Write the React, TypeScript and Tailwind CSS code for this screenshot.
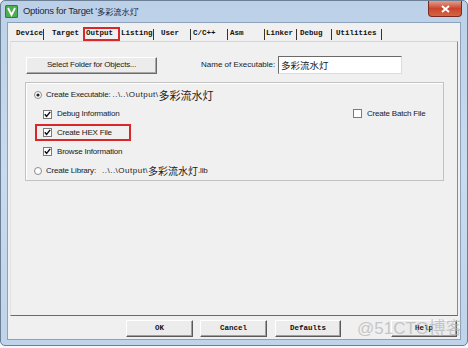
import React from "react";

const Check = ({ checked }: { checked: boolean }) => (
  <svg width="9" height="9" viewBox="0 0 9 9" className="shrink-0">
    <rect x="0.5" y="0.5" width="8" height="8" fill="#ffffff" stroke="#7a7a7a" />
    {checked && (
      <path d="M1.8 4.2 L3.6 6.4 L7.2 1.9" stroke="#111111" strokeWidth="1.5" fill="none" />
    )}
  </svg>
);

const Radio = ({ on }: { on: boolean }) => (
  <svg width="8" height="8" viewBox="0 0 8 8" className="shrink-0">
    <circle cx="4" cy="4" r="3.5" fill="#ffffff" stroke="#8a8a8a" />
    {on && <circle cx="4" cy="4" r="1.6" fill="#222222" />}
  </svg>
);

const cjk = "text-[11px] tracking-normal [font-family:'Noto_Sans_CJK_SC',sans-serif]";

const tabs = [
  { label: "Device", w: "w-[32px]", pl: "pl-[4px]", sep: true },
  { label: "Target", w: "w-[39px]", pl: "pl-[8px]", sep: false },
  { label: "Output", w: "w-[37px]", pl: "pl-[1px]", sep: false, active: true },
  { label: "Listing", w: "w-[34px]", pl: "pl-[1px]", sep: true },
  { label: "User", w: "w-[37px]", pl: "pl-[7px]", sep: true },
  { label: "C/C++", w: "w-[37px]", pl: "pl-[2px]", sep: true },
  { label: "Asm", w: "w-[37px]", pl: "pl-[2px]", sep: true },
  { label: "Linker", w: "w-[32px]", pl: "pl-[1px]", sep: true },
  { label: "Debug", w: "w-[35px]", pl: "pl-[3px]", sep: true },
  { label: "Utilities", w: "w-[50px]", pl: "pl-[4px]", sep: true },
];

const BottomButton = ({ label, w }: { label: string; w: string }) => (
  <div
    className={`${w} h-[17px] flex items-center justify-center bg-[#ececec] border border-t-[#ffffff] border-l-[#ffffff] border-r-[#5a5a5a] border-b-[#5a5a5a] shadow-[inset_-1px_-1px_0_#a0a0a0] text-[7.5px] font-bold text-[#111] [font-family:'Liberation_Mono',monospace]`}
  >
    {label}
  </div>
);

export default function App() {
  return (
    <div className="w-[468px] h-[348px] bg-[#f4f6f9] overflow-hidden [font-family:'Liberation_Sans',sans-serif]">
      <div className="w-[468px] h-[346px] rounded-[5px] bg-gradient-to-b from-[#bcd1e8] via-[#c9dbee] to-[#bfd3ea] border border-[#6b7f95] flex flex-col relative">
        {/* Title bar */}
        <div className="h-[21px] flex items-center shrink-0">
          <svg width="13" height="13" viewBox="0 0 13 13" className="ml-[4px]">
            <rect x="0" y="0" width="13" height="13" rx="1.5" fill="#2f7f38" />
            <rect x="1" y="1" width="11" height="11" rx="1" fill="#4cae4f" />
            <path d="M3 3 L6.5 10 L10 3" stroke="#ffffff" strokeWidth="1.8" fill="none" />
          </svg>
          <div className="ml-[5px] flex items-center whitespace-nowrap text-[9.5px] tracking-[-0.3px] text-[#1e2a38]">
            <span>Options for Target '</span>
            <span className="inline-block w-[40px] h-[12px] overflow-visible">
              <span className="inline-block origin-[0_50%] scale-[0.68] text-[12px] leading-[12px] tracking-normal [font-family:'Noto_Sans_CJK_SC',sans-serif]">多彩流水灯</span>
            </span>
            <span>'</span>
          </div>
          <div className="ml-auto mr-[5px] self-start w-[34px] h-[16px] rounded-b-[4px] bg-gradient-to-b from-[#e49c8c] via-[#c9442c] to-[#d5653f] border border-[#7a2a20] border-t-0 flex items-center justify-center">
            <svg width="9" height="8" viewBox="0 0 9 8">
              <path d="M1 1 L8 7 M8 1 L1 7" stroke="#ffffff" strokeWidth="2" />
            </svg>
          </div>
        </div>

        {/* Client */}
        <div className="ml-[6px] w-[454px] h-[318px] bg-[#f0f0f0] border border-[#8da2ba] flex flex-col">
          {/* Tabs */}
          <div className="mt-[4px] ml-[4px] h-[14px] flex text-[7.5px] font-bold text-[#111] [font-family:'Liberation_Mono',monospace]">
            {tabs.map((t) => (
              <div
                key={t.label}
                className={`${t.w} h-[14px] flex items-center ${t.active ? "border-2 border-[#d8282a] pl-[1px]" : t.pl}`}
              >
                <span className="leading-none">{t.label}</span>
                {t.sep && <span className="ml-auto w-px h-[11px] bg-[#333]" />}
              </div>
            ))}
          </div>

          {/* Panel */}
          <div className="ml-[2px] w-[448px] h-[275px] border border-t-[#d6d6d6] border-l-[#e2e2e2] border-r-[#8a8a8a] border-b-[#6a6a6a] flex flex-col text-[8px] text-[#1a1a1a]">
            <div className="mt-[14px] flex items-center">
              <div className="ml-[15px] w-[131px] h-[17px] flex items-center justify-center bg-[#ececec] border border-t-[#ffffff] border-l-[#ffffff] border-r-[#6a6a6a] border-b-[#6a6a6a] shadow-[inset_-1px_-1px_0_#a8a8a8] tracking-[-0.2px]">
                Select Folder for Objects...
              </div>
              <span className="ml-[44px] w-[76px] whitespace-nowrap">Name of Executable:</span>
              <div className="ml-[1px] w-[124px] h-[18px] bg-white border border-t-[#6a6a6a] border-l-[#6a6a6a] border-r-[#dcdcdc] border-b-[#dcdcdc] flex items-center pl-[2px]">
                <span className="inline-block w-[47px] h-[12px] whitespace-nowrap">
                  <span className="inline-block origin-[0_50%] scale-[0.79] text-[12px] leading-[12px] [font-family:'Noto_Sans_CJK_SC',sans-serif]">多彩流水灯</span>
                </span>
              </div>
            </div>

            {/* Group box */}
            <div className="mt-[8px] ml-[14px] w-[419px] h-[99px] border border-[#c2c2c2] shadow-[inset_1px_1px_0_#ffffff] flex pt-[3px] tracking-[-0.2px]">
              <div className="w-[327px] flex flex-col">
                <div className="h-[19px] flex items-center pl-[8px] whitespace-nowrap">
                  <Radio on />
                  <span className="ml-[4px] min-w-[54px] shrink-0">Create Executable:</span>
                  <span className="ml-[2px] tracking-[0.5px]">..\..\Output\</span>
                  <span className={cjk}>多彩流水灯</span>
                </div>
                <div className="h-[19px] flex items-center pl-[17px]">
                  <Check checked />
                  <span className="ml-[5px]">Debug Information</span>
                </div>
                <div className="h-[19px] flex items-center">
                  <div className="ml-[9px] w-[96px] h-[17px] border-2 border-[#d8282a] flex items-center pl-[6px]">
                    <Check checked />
                    <span className="ml-[5px]">Create HEX File</span>
                  </div>
                </div>
                <div className="h-[19px] flex items-center pl-[17px]">
                  <Check checked />
                  <span className="ml-[5px]">Browse Information</span>
                </div>
                <div className="h-[19px] flex items-center pl-[8px] whitespace-nowrap">
                  <Radio on={false} />
                  <span className="ml-[4px] min-w-[54px] shrink-0">Create Library:</span>
                  <span className="ml-[2px] tracking-[0.5px]">..\..\Output\</span>
                  <span className="text-[10px] tracking-normal [font-family:'Noto_Sans_CJK_SC',sans-serif]">多彩流水灯</span>
                  <span>.lib</span>
                </div>
              </div>
              <div className="pt-[18px]">
                <div className="h-[19px] flex items-center">
                  <Check checked={false} />
                  <span className="ml-[5px]">Create Batch File</span>
                </div>
              </div>
            </div>
          </div>

          {/* Bottom buttons */}
          <div className="mt-[4px] flex relative">
            <div className="ml-[118px]" />
            <BottomButton label="OK" w="w-[67px]" />
            <div className="w-[7px]" />
            <BottomButton label="Cancel" w="w-[67px]" />
            <div className="w-[8px]" />
            <BottomButton label="Defaults" w="w-[66px]" />
            <div className="w-[50px]" />
            <BottomButton label="Help" w="w-[66px]" />
            <div className="absolute left-[349px] top-[-4px] text-[17px] leading-[22px] text-[#b4b4b4] opacity-70 whitespace-nowrap [font-family:'Liberation_Sans','Noto_Sans_CJK_SC',sans-serif]">
              @51CTO<span className="[font-family:'Noto_Sans_CJK_SC',sans-serif]">博客</span>
            </div>
          </div>
        </div>
      </div>
    </div>
  );
}
